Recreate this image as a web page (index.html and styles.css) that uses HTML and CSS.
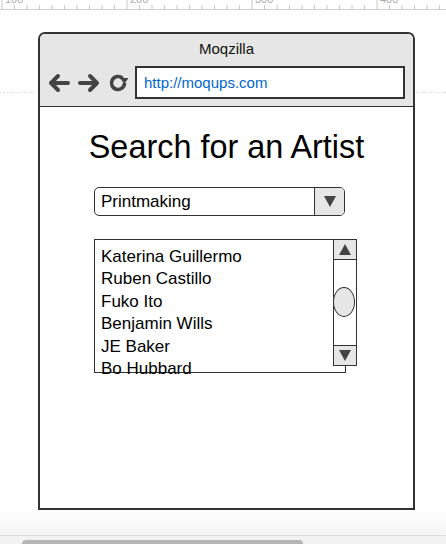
FILE: index.html
```html
<!DOCTYPE html>
<html>
<head>
<meta charset="utf-8">
<link rel="stylesheet" href="styles.css">
</head>
<body>
<div class="ruler">
  <svg width="446" height="10" viewBox="0 0 446 10">
    <g class="ticks" id="ticks"></g>
    <text x="5" y="3">100</text>
    <text x="130" y="3">200</text>
    <text x="255" y="3">300</text>
    <text x="380" y="3">400</text>
  </svg>
</div>
<div class="guide"></div>
<div class="window">
  <div class="titlebar">
    <div class="title">Moqzilla</div>
    <div class="nav">
      <svg class="icon" width="22" height="20" viewBox="0 0 22 20"><path d="M20 10 H3 M10 3 L3 10 L10 17" fill="none" stroke="#444" stroke-width="4" stroke-linecap="round" stroke-linejoin="round"/></svg>
      <svg class="icon" width="22" height="20" viewBox="0 0 22 20"><path d="M2 10 H19 M12 3 L19 10 L12 17" fill="none" stroke="#444" stroke-width="4" stroke-linecap="round" stroke-linejoin="round"/></svg>
      <svg class="icon" width="20" height="20" viewBox="0 0 20 20"><path d="M16.5 10 A6.5 6.5 0 1 1 14.6 5.4" fill="none" stroke="#444" stroke-width="3.6"/><polygon points="12,5 20.5,5 16.3,11" fill="#444"/></svg>
      <div class="address">http://moqups.com</div>
    </div>
  </div>
  <div class="content">
    <h1 class="heading">Search for an Artist</h1>
    <div class="select">
      <div class="select-text">Printmaking</div>
      <div class="select-btn"><span class="tri-down"></span></div>
    </div>
    <div class="list">
      <div class="item">Katerina Guillermo</div>
      <div class="item">Ruben Castillo</div>
      <div class="item">Fuko Ito</div>
      <div class="item">Benjamin Wills</div>
      <div class="item">JE Baker</div>
      <div class="item">Bo Hubbard</div>
      <div class="scrollbar">
        <div class="sb-btn sb-up"><span class="tri-up"></span></div>
        <div class="sb-track"><div class="sb-thumb"></div></div>
        <div class="sb-btn sb-down"><span class="tri-down small"></span></div>
      </div>
    </div>
  </div>
</div>
<div class="fade"></div>
<div class="hscroll"><div class="hthumb"></div></div>
<script>
  var g = document.getElementById('ticks');
  var s = '';
  for (var i = 0; i < 36; i++) {
    var x = 2 + i * 12.5;
    var major = i % 10 === 0;
    s += '<line x1="' + x + '" x2="' + x + '" y1="' + (major ? 0 : 5) + '" y2="9"/>';
  }
  g.innerHTML = s;
</script>
</body>
</html>
```
FILE: styles.css
```css
html, body {
  margin: 0;
  padding: 0;
  background: #fff;
  overflow: hidden;
  font-family: "Liberation Sans", Arial, sans-serif;
}
body {
  width: 446px;
  height: 544px;
  position: relative;
}
.ruler {
  height: 10px;
  background: #fff;
  box-shadow: inset 0 -1px 0 #d0d0d0;
}
.ruler svg {
  display: block;
}
.ruler .ticks line {
  stroke: #c8c8c8;
  stroke-width: 1;
}
.ruler text {
  font-family: "Liberation Sans", Arial, sans-serif;
  font-size: 11px;
  fill: #aaa;
}
.guide {
  position: absolute;
  left: 0;
  right: 0;
  top: 92px;
  height: 1px;
  background: repeating-linear-gradient(to right, #dcdcdc 0 1.5px, transparent 1.5px 3.5px);
}
.window {
  position: relative;
  box-sizing: border-box;
  margin: 22px 0 0 38px;
  width: 377px;
  height: 478px;
  border: 2px solid #333;
  border-radius: 7px 7px 0 0;
  background: #fff;
}
.titlebar {
  background: #e6e6e6;
  border-bottom: 1px solid #333;
  border-radius: 5px 5px 0 0;
  padding: 6px 8px 7px 8px;
}
.title {
  text-align: center;
  font-size: 15px;
  line-height: 18px;
  color: #111;
}
.nav {
  display: flex;
  align-items: center;
  margin-top: 8px;
}
.icon {
  display: block;
  flex: none;
  margin-right: 8px;
}
.icon:nth-child(3) {
  margin-right: 7px;
}
.address {
  flex: 1;
  box-sizing: border-box;
  height: 33px;
  border: 2px solid #333;
  background: #fff;
  color: #0066cc;
  font-size: 15px;
  line-height: 29px;
  padding-left: 7px;
}
.content {
  padding-top: 22px;
}
.heading {
  margin: 0;
  font-weight: normal;
  font-size: 32.4px;
  line-height: 37px;
  text-align: center;
  color: #000;
}
.select {
  box-sizing: border-box;
  margin: 21px 0 0 54px;
  width: 251px;
  height: 29px;
  border: 1.5px solid #333;
  border-radius: 5px;
  display: flex;
  background: #fff;
}
.select-text {
  flex: 1;
  font-size: 17px;
  line-height: 27px;
  padding-left: 6px;
  color: #000;
}
.select-btn {
  width: 29px;
  background: #e6e6e6;
  border-left: 1px solid #333;
  border-radius: 0 4px 4px 0;
  display: flex;
  align-items: center;
  justify-content: center;
}
.tri-down {
  width: 0;
  height: 0;
  border-left: 6px solid transparent;
  border-right: 6px solid transparent;
  border-top: 11px solid #444;
}
.tri-down.small {
  border-left-width: 6.5px;
  border-right-width: 6.5px;
}
.tri-up {
  width: 0;
  height: 0;
  border-left: 6.5px solid transparent;
  border-right: 6.5px solid transparent;
  border-bottom: 11px solid #444;
}
.list {
  position: relative;
  box-sizing: border-box;
  margin: 23px 0 0 54px;
  width: 252px;
  height: 134px;
  border: 1.5px solid #333;
  padding: 5.5px 0 0 6px;
}
.item {
  font-size: 17px;
  line-height: 22.6px;
  color: #000;
  white-space: nowrap;
}
.item:last-of-type {
  height: 12.5px;
  overflow: hidden;
}
.scrollbar {
  position: absolute;
  left: 237.5px;
  top: -1.5px;
  box-sizing: border-box;
  width: 24px;
  height: 127px;
  border: 1.5px solid #333;
  background: #fff;
  display: flex;
  flex-direction: column;
}
.sb-btn {
  height: 19px;
  background: #e6e6e6;
  display: flex;
  align-items: center;
  justify-content: center;
  flex: none;
}
.sb-up {
  border-bottom: 1px solid #333;
}
.sb-down {
  border-top: 1px solid #333;
}
.sb-track {
  flex: 1;
  padding-top: 27px;
}
.sb-thumb {
  box-sizing: border-box;
  width: 22px;
  height: 30px;
  margin-left: -0.5px;
  border: 1.2px solid #333;
  border-radius: 50%;
  background: #e6e6e6;
}
.fade {
  height: 25px;
  background: linear-gradient(to bottom, #fff, #f4f4f4);
}
.hscroll {
  height: 8px;
  border-top: 1px solid #dedede;
  background: #f2f2f2;
  overflow: hidden;
}
.hthumb {
  margin: 4px 0 0 22px;
  width: 281px;
  height: 8px;
  background: #b6b6b6;
  border-radius: 4px 4px 0 0;
}
```
